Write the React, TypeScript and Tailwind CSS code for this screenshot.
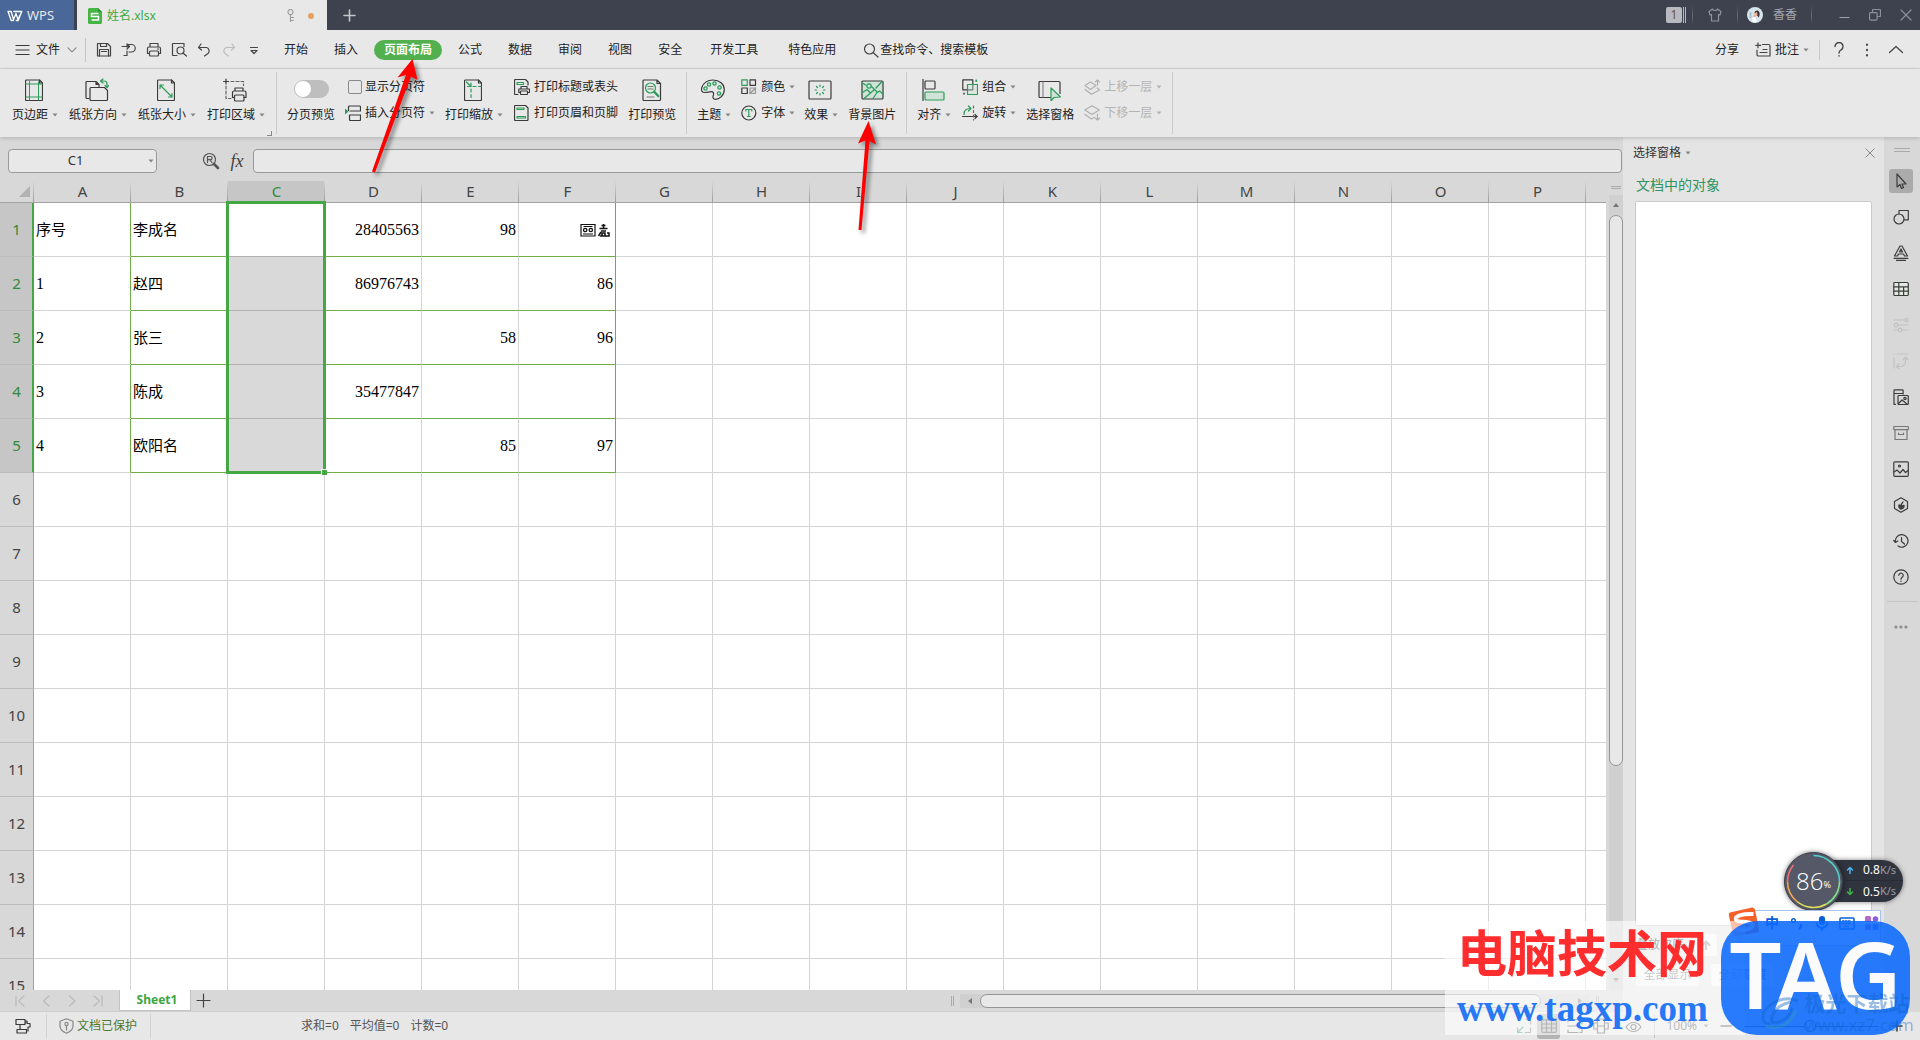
import React from "react";

const G = "#2b9c5a";
const GF = "#cfe3d8";

type IconProps = { w: number; h: number; c?: string; children: React.ReactNode; className?: string };

function Icon({ w, h, c = "#3a3a3a", children, className = "" }: IconProps) {
  return (
    <svg
      width={w}
      height={h}
      viewBox={`0 0 ${w} ${h}`}
      fill="none"
      stroke={c}
      strokeWidth="1.2"
      strokeLinecap="round"
      strokeLinejoin="round"
      className={`shrink-0 ${className}`}
      aria-hidden="true"
    >
      {children}
    </svg>
  );
}

function Caret({ light = false }: { light?: boolean }) {
  return (
    <svg width="6" height="4" viewBox="0 0 6 4" className="shrink-0" aria-hidden="true">
      <path d="M0.5 0.5h5L3 3.5z" fill={light ? "#b4b4b4" : "#858585"} />
    </svg>
  );
}

/* ---------- title bar ---------- */

function TitleSep() {
  return <span className="h-5 w-px bg-gradient-to-b from-[#3e424e] via-[#6a6d77] to-[#3e424e]" />;
}

function TitleBar() {
  return (
    <header className="flex h-[30px] shrink-0 bg-[#3e424e] text-[#e8e8e8]">
      <button className="flex w-[74px] items-center gap-1 bg-[#4a6799] pt-px pl-[7px] text-[13px]">
        <Icon w={16} h={12} c="#ffffff">
          <path d="M1 1.500h3.200l2.300 8L9 3.500l2 6L14.800 1.500H6.800M1 1.500l3.200 9h2L9 3.500M9.200 10.500h2L14.800 1.500" strokeWidth="1.3" />
        </Icon>
        WPS
      </button>
      <div className="ml-[3px] flex w-[250px] items-center bg-[#e8e8e8] pt-px pl-[11px] text-[12px] text-[#3faa42]">
        <svg width="14" height="16" viewBox="0 0 14 16" aria-hidden="true">
          <path d="M1.500 0h8.500l4 4v10.500a1.500 1.500 0 0 1-1.500 1.500h-11a1.500 1.500 0 0 1-1.500-1.500v-13a1.500 1.500 0 0 1 1.500-1.500z" fill="#45b545" />
          <path d="M10 0l4 4h-4z" fill="#2f8f35" />
          <path d="M10.500 5.500H3.500v3h7v3.500H3.500" stroke="#fff" strokeWidth="1.5" fill="none" />
        </svg>
        <span className="ml-[5px] flex-1">姓名.xlsx</span>
        <Icon w={8} h={13} c="#a0a0a0">
          <circle cx="3.500" cy="3" r="2.500" />
          <path d="M3.500 5.500v7M3.500 8.500h3M3.500 11.500h3" />
        </Icon>
        <span className="mr-[13px] ml-[13px] h-[6px] w-[6px] rounded-full bg-[#e8a05c]" />
      </div>
      <button className="ml-4 flex w-[14px] items-center" aria-label="新建">
        <Icon w={13} h={13} c="#c4c5c9">
          <path d="M6.500 1v11M1 6.500h11" strokeWidth="1.6" />
        </Icon>
      </button>
      <div className="ml-auto flex items-center pr-2 text-[12px] text-[#a6a8ae]">
        <span className="flex h-4 items-center gap-px">
          <span className="flex h-4 w-4 items-center justify-center rounded-[2px] bg-[#b9bac0] text-[12px] text-[#70512c]">1</span>
          <span className="h-4 w-px bg-[#b9bac0]" />
          <span className="h-4 w-px bg-[#b9bac0]" />
        </span>
        <span className="ml-[6px] flex"><TitleSep /></span>
        <button className="mx-[15px]" aria-label="皮肤">
          <Icon w={14} h={14} c="#8f929a">
            <path d="M4.500 1L1 3.500l1 3.500 1.500-.5v6.500h7V6.500l1.500.5 1-3.500L9.500 1c-.5 2-4.500 2-5 0z" />
          </Icon>
        </button>
        <TitleSep />
        <button className="ml-[9px] flex items-center gap-[10px]">
          <svg width="16" height="16" viewBox="0 0 16 16" aria-hidden="true">
            <circle cx="8" cy="8" r="8" fill="#d7e6ea" />
            <path d="M7.500 6c.5-2.500 2.500-3 4-2 1.500 1.200 1.500 4 .3 6.500-.8-1-1.300-1.700-2-2z" fill="#3d3437" />
            <path d="M7 6.500l3-1.500.5 3-2 2-2.500.5z" fill="#e8b7a2" />
            <path d="M2.500 4.500l2 1v6l-2-1z" fill="#a7c3c9" />
            <path d="M5 11l3-1 2 5-4 .3z" fill="#ffffff" />
          </svg>
          香香
        </button>
        <span className="ml-[14px] flex"><TitleSep /></span>
        <button className="ml-[27px]" aria-label="最小化">
          <Icon w={11} h={12} c="#a0a2a9"><path d="M1 8.500h9" /></Icon>
        </button>
        <button className="ml-[19px]" aria-label="还原">
          <Icon w={12} h={12} c="#8d9098">
            <path d="M3.500 3.500v-2a1 1 0 0 1 1-1h6a1 1 0 0 1 1 1v5a1 1 0 0 1-1 1h-2" />
            <rect x=".6" y="3.600" width="7.500" height="7.500" rx="1" />
          </Icon>
        </button>
        <button className="ml-[19px]" aria-label="关闭">
          <Icon w={12} h={12} c="#8d9098"><path d="M1 1l10 10M11 1L1 11" /></Icon>
        </button>
      </div>
    </header>
  );
}

/* ---------- menu bar ---------- */

const quickTools = [
  { label: "保存", art: (<><path d="M1.500 1.500h10l3 3v9.500h-13z" /><path d="M4.500 1.500v3h6v-3M3.500 14V7.500h9V14M5.500 9.500h5" /></>) },
  { label: "输出", art: (<><path d="M6 13.500V9M6 5V2.500h4.500a3.500 3.500 0 0 1 0 7.500H8M1 4.500h7M6 2L8.500 4.500 6 7M6 13.500h-3" /></>) },
  { label: "打印", art: (<><path d="M4 5V1.500h8V5M3.500 11.500h-2v-5a1.500 1.500 0 0 1 1.500-1.500h10a1.500 1.500 0 0 1 1.500 1.500v5h-2" /><rect x="3.500" y="9" width="9" height="5" rx="1" /><path d="M11.500 7h1" /></>) },
  { label: "打印预览", art: (<><path d="M6 13.500H2a.5.5 0 0 1-.5-.5V2a.5.5 0 0 1 .5-.5h11v3" /><circle cx="9.500" cy="8.500" r="3.500" /><path d="M12 11l3.500 3" /></>) },
  { label: "撤销", art: (<><path d="M3 5.500h7.500a3.500 3.500 0 0 1 1.500 6L8.500 14M5 2L2.500 5.500 5.500 8" /></>) },
  { label: "恢复", light: true, art: (<><path d="M13 5.500H5.500a3.500 3.500 0 0 0-1.500 6L7.500 14M11 2l2.500 3.500L10.500 8" /></>) },
  { label: "更多", art: (<><path d="M4.500 5.500h7M5 8.500l3 3 3-3z" /></>) },
];

const menus = ["开始", "插入", "页面布局", "公式", "数据", "审阅", "视图", "安全", "开发工具", "特色应用"];

function menuClass(name: string) {
  if (name === "页面布局") return "mx-[3px] h-5 rounded-full bg-[#52b04f] px-[10px] font-bold text-white";
  return name.length > 2 ? "px-[15px]" : "px-[13px]";
}

function MenuBar() {
  return (
    <nav className="flex h-[39px] shrink-0 items-center border-b border-[#d6d6d6] bg-[#e8e8e8] pt-px text-[12px] text-[#222]">
      <button className="ml-[15px] flex items-center">
        <Icon w={15} h={12}><path d="M.5 1.500h14M.5 6h14M.5 10.500h14" strokeLinecap="butt" strokeWidth="1" /></Icon>
        <span className="ml-[6px]">文件</span>
        <Icon w={10} h={6} c="#8c8c8c" className="ml-[7px]"><path d="M1 .8l4 4 4-4" /></Icon>
      </button>
      <span className="ml-2 h-6 w-px bg-[#c4c4c4]" />
      <div className="ml-[10px] flex gap-[9px]">
        {quickTools.map((t) => (
          <button key={t.label} aria-label={t.label}>
            <Icon w={16} h={16} c={t.light ? "#bcbcbc" : "#444"}>{t.art}</Icon>
          </button>
        ))}
      </div>
      <div className="ml-[9px] flex items-center">
        {menus.map((m) => (
          <button key={m} className={menuClass(m)}>{m}</button>
        ))}
      </div>
      <button className="ml-[12px] flex items-center gap-px">
        <Icon w={16} h={16} c="#444"><circle cx="6.500" cy="7" r="5" /><path d="M10.300 10.700L15 15" /></Icon>
        查找命令、搜索模板
      </button>
      <div className="ml-auto flex items-center pr-4">
        <button>分享</button>
        <button className="ml-4 flex items-center">
          <Icon w={16} h={16} c="#444">
            <path d="M7.500 2.500h6a1.500 1.500 0 0 1 1.500 1.500v10H3.500A1.500 1.500 0 0 1 2 12.500V8M3 .8v5M.8 3.300h5M8 7.500h4M5 10.500h7" />
          </Icon>
          <span className="mr-1 ml-1">批注</span>
          <Caret />
        </button>
        <span className="ml-[10px] h-5 w-px bg-[#c8c8c8]" />
        <button className="ml-[14px]" aria-label="帮助">
          <Icon w={10} h={15} c="#444"><path d="M1 4.500a4 4 0 1 1 6.200 3.300C5.500 9 5 9.500 5 11M5 13.800v.2" strokeWidth="1.400" /></Icon>
        </button>
        <button className="ml-[20px]" aria-label="更多">
          <Icon w={6} h={14} c="#444"><path d="M3 1.500v.5M3 6.800v.5M3 12v.5" strokeWidth="2" /></Icon>
        </button>
        <button className="ml-[18px]" aria-label="收起功能区">
          <Icon w={16} h={9} c="#444"><path d="M1.500 7.500L8 1.500l6.500 6" /></Icon>
        </button>
      </div>
    </nav>
  );
}

/* ---------- ribbon ---------- */

const page = "M1.500 1h13l3 3v16.500a1 1 0 0 1-1 1h-15a1 1 0 0 1-1-1V2a1 1 0 0 1 1-1z";
const fold = "M14.500 1v3h3";

function Big({ label, caret = false, children }: { label: string; caret?: boolean; children: React.ReactNode }) {
  return (
    <button className="flex shrink-0 flex-col items-center">
      <span className={`flex h-[22px] items-center ${caret ? "pr-[3px]" : ""}`}>{children}</span>
      <span className={`mt-[6px] flex items-center leading-4 ${caret ? "pr-px" : ""}`}>
        {label}
        {caret && <span className="ml-1 flex"><Caret /></span>}
      </span>
    </button>
  );
}

function Small({ label, caret = false, disabled = false, children }: { label: string; caret?: boolean; disabled?: boolean; children: React.ReactNode }) {
  return (
    <button disabled={disabled} className={`flex items-center leading-4 ${disabled ? "text-[#b4b4b4]" : ""}`}>
      <span className="mr-1 flex">{children}</span>
      {label}
      {caret && <span className="ml-[4px] flex"><Caret light={disabled} /></span>}
    </button>
  );
}

function Sep() {
  return <span className="-mt-[7px] h-[62px] w-px shrink-0 bg-[#cbcbcb]" />;
}

function Stack({ children }: { children: React.ReactNode }) {
  return <div className="flex shrink-0 flex-col items-start gap-[10px]">{children}</div>;
}

function Ribbon() {
  return (
    <section className="relative z-10 flex h-[68px] shrink-0 items-start gap-[10px] bg-[#e8e8e8] pt-[10px] pl-3 text-[12px] whitespace-nowrap text-[#222] shadow-[0_1px_4px_rgba(0,0,0,0.18)]">
      <Big label="页边距" caret>
        <Icon w={18} h={22}>
          <path d={page} /><path d={fold} />
          <path d="M4.500 2v19M13.500 3v18M1 5h16M1 18h16" stroke={G} strokeWidth="1" />
        </Icon>
      </Big>
      <Big label="纸张方向" caret>
        <Icon w={24} h={24}>
          <path d="M4 20.500H2a1 1 0 0 1-1-1V4.500a1 1 0 0 1 1-1h9l3 3v2M11 3.500v3h3" />
          <path d="M6 9.500h13.500l3 3v9a1 1 0 0 1-1 1H6a1 1 0 0 1-1-1v-11a1 1 0 0 1 1-1z" />
          <path d="M16 3h3a3 3 0 0 1 3 3v3M18 1l-2.500 2L18 5M20 7.500l2 2 2-2" stroke={G} />
        </Icon>
      </Big>
      <Big label="纸张大小" caret>
        <Icon w={18} h={22}>
          <path d={page} /><path d={fold} />
          <path d="M3 6l12 12M3 9.500V6h3.500M15 14.500V18h-3.500" stroke={G} />
        </Icon>
      </Big>
      <div className="relative shrink-0">
        <Big label="打印区域" caret>
          <Icon w={24} h={24}>
            <path d="M3 1v5M.6 3.500h5" />
            <path d="M8 3.500h12.500v4M3 8v12.500h5" strokeDasharray="3 2" stroke="#666" />
            <path d="M12 13v-3h8v3M11 19.500H9.500v-5A1.500 1.500 0 0 1 11 13h10.500a1.500 1.500 0 0 1 1.500 1.500v5h-2" />
            <rect x="11.500" y="17" width="9.500" height="6" rx="1" />
          </Icon>
        </Big>
        <span className="absolute right-[-6px] bottom-[-13px] h-[5px] w-[5px] border-r border-b border-[#888]" />
      </div>
      <Sep />
      <label className="flex shrink-0 flex-col items-center">
        <input type="checkbox" role="switch" className="relative mt-px h-[18px] w-[35px] appearance-none rounded-full bg-[#bebebe] before:absolute before:top-px before:left-px before:h-4 before:w-4 before:rounded-full before:bg-white checked:bg-[#52b04f] checked:before:left-[18px]" />
        <span className="mt-[9px] leading-4">分页预览</span>
      </label>
      <Stack>
        <label className="flex items-center leading-4">
          <input type="checkbox" className="mr-[3px] ml-[3px] h-[14px] w-[14px] appearance-none rounded-[2px] border border-[#8a8a8a] checked:bg-[#52b04f]" />
          显示分页符
        </label>
        <Small label="插入分页符" caret>
          <Icon w={16} h={16}>
            <path d="M0 3.500v6L3.500 6.500z" fill={G} stroke="none" />
            <path d="M3.500 5.500V2a1 1 0 0 1 1-1h10a1 1 0 0 1 1 1v3.500M15.500 10v4.500a1 1 0 0 1-1 1h-9a1 1 0 0 1-1-1V10zM5 6h10.500" />
          </Icon>
        </Small>
      </Stack>
      <Big label="打印缩放" caret>
        <Icon w={18} h={22}>
          <path d={page} /><path d={fold} />
          <path d="M2.500 3L7 7.500M7 4v3.500H3.500" stroke={G} />
          <path d="M9 7.500h8M7 10v11" stroke={G} strokeDasharray="3 2.500" />
        </Icon>
      </Big>
      <Stack>
        <Small label="打印标题或表头">
          <Icon w={16} h={16}>
            <path d="M4 15.500H1.500a1 1 0 0 1-1-1v-13a1 1 0 0 1 1-1h10l2.500 2.500v3" />
            <path d="M3 3.500h6.500v2H3z" stroke={G} />
            <path d="M7 10V7.500h6V10M6 13.500H4.800V10h10.700v3.500H14" /><rect x="6.500" y="12" width="7" height="3.500" rx=".8" />
          </Icon>
        </Small>
        <Small label="打印页眉和页脚">
          <Icon w={16} h={16}>
            <path d="M1.500.5h10L14 3v11.500a1 1 0 0 1-1 1H1.500a1 1 0 0 1-1-1v-13a1 1 0 0 1 1-1z" />
            <path d="M3 3h7v1.500H3zM3 11.500h8.500V13H3z" stroke={G} />
          </Icon>
        </Small>
      </Stack>
      <Big label="打印预览">
        <Icon w={20} h={22}>
          <path d="M2 1h13l3.500 3.500v16a1 1 0 0 1-1 1H2a1 1 0 0 1-1-1V2a1 1 0 0 1 1-1zM15 1v3.500h3.500" />
          <circle cx="8.500" cy="9" r="5" stroke={G} fill="#dcebe2" />
          <path d="M12.200 12.700l4 4.300" stroke={G} strokeWidth="2.400" />
          <path d="M6 7.500h5M6 10h5M5 18h7" stroke="#777" />
        </Icon>
      </Big>
      <Sep />
      <div className="flex shrink-0 gap-[9px]">
        <Big label="主题" caret>
          <Icon w={24} h={22}>
            <path d="M4 13.500C.5 13.500 0 11 .8 8.500 2.500 4 7 1 12 1c6.500 0 11.300 4 11.300 9.500 0 6-5 9.800-8.500 9.800-3 0-3.300-2-2.500-4 .8-2.300 0-3.600-2-3.600-2.300 0-3.500.8-6.300.8z" />
            <g stroke={G} fill={GF}><circle cx="4.500" cy="9.500" r="1.700" /><circle cx="8" cy="5.500" r="1.700" /><circle cx="13.500" cy="4.500" r="1.700" /><circle cx="18.500" cy="8.500" r="1.700" /><circle cx="18" cy="14.500" r="1.700" /></g>
          </Icon>
        </Big>
        <Stack>
          <Small label="颜色" caret>
            <Icon w={16} h={16}>
              <rect x=".8" y=".8" width="5.500" height="5.500" stroke={G} /><rect x="9" y=".8" width="5.500" height="5.500" />
              <rect x=".8" y="9" width="5.500" height="5.500" /><rect x="9" y="9" width="5.500" height="5.500" stroke="#999" fill="#ddd" /><path d="M9 14.500L14.500 9" stroke="#999" />
            </Icon>
          </Small>
          <Small label="字体" caret>
            <Icon w={16} h={16}>
              <circle cx="7.800" cy="8" r="7" />
              <path d="M4.800 6V4.500h6V6M7.800 4.500v7M6.500 11.500h2.600" stroke={G} />
            </Icon>
          </Small>
        </Stack>
        <Big label="效果" caret>
          <Icon w={24} h={20}>
            <rect x="1" y="1" width="22" height="18" rx="1" />
            <path d="M12 5v1.500M12 13.500V15M7 10h1.500M15.500 10H17M8.500 6.500l1 1M14.500 12.500l1 1M15.500 6.500l-1 1M9.500 12.500l-1 1" stroke={G} />
          </Icon>
        </Big>
        <Big label="背景图片">
          <Icon w={23} h={20}>
            <rect x="1" y="1" width="21" height="18" rx="1" fill={GF} />
            <path d="M1.500 12.500L6 9.500l3.500 3.500 4-3.500 3 3 2-1.500 3.500 3M1.500 3l3 2M10.500 6.500L13 9M15 8l6-6.500M3 18.500l6-5M12 18.500l4-6" stroke={G} />
            <circle cx="8" cy="6" r="2.200" stroke={G} />
          </Icon>
        </Big>
      </div>
      <Sep />
      <Big label="对齐" caret>
        <Icon w={23} h={22}>
          <path d="M1 .5v21" /><rect x="3" y="2" width="10" height="8" rx="1" />
          <rect x="3" y="13" width="19" height="8" rx="1" stroke={G} fill={GF} />
        </Icon>
      </Big>
      <Stack>
        <Small label="组合" caret>
          <Icon w={16} h={16}>
            <rect x=".8" y=".8" width="10" height="10" /><rect x="5.500" y="5.500" width="10" height="10" stroke={G} fill="#cfe3d866" />
            <path d="M14.200 1.500v.5" stroke={G} strokeWidth="1.800" /><path d="M2 14.500v.3" stroke="#555" strokeWidth="1.800" />
          </Icon>
        </Small>
        <Small label="旋转" caret>
          <Icon w={16} h={16}>
            <path d="M2 9.500c0-4 2-6 6.500-6M6.500 1L9 3.500 6.500 6" stroke={G} />
            <path d="M.6 11.500h14.800M13 9.500l2 2-2 2" />
            <path d="M11.500 1v14" strokeDasharray="2 2.500" stroke="#666" />
          </Icon>
        </Small>
      </Stack>
      <Big label="选择窗格">
        <Icon w={24} h={22}>
          <path d="M13 18.500H2a1 1 0 0 1-1-1v-14a1 1 0 0 1 1-1h19a1 1 0 0 1 1 1v11" /><path d="M5 3v15" stroke="#888" />
          <path d="M13 9v13l3-3.500 6.500-.5z" stroke={G} fill={GF} />
        </Icon>
      </Big>
      <Stack>
        <Small label="上移一层" caret disabled>
          <Icon w={16} h={16} c="#b0b0b0"><path d="M6.500 3L1 6.500l5.500 4 5.500-4zM1 10.500l6.500 4.800 8-4.300-2.500-2M13.500 6V1M11.500 2.800L13.500 1l2 1.800" /></Icon>
        </Small>
        <Small label="下移一层" caret disabled>
          <Icon w={16} h={16} c="#b0b0b0"><path d="M8 .8L.8 5 8 9.500 15.300 5zM1 9.500L7.500 14l3-1.800M13.500 9v6M11.500 13.200l2 1.800 2-1.800" /></Icon>
        </Small>
      </Stack>
      <Sep />
    </section>
  );
}

/* ---------- sheet ---------- */

const cols = "ABCDEFGHIJKLMNOP".split("");
const rows = Array.from({ length: 15 }, (_, i) => i + 1);
const data: Record<string, string> = {
  A1: "序号", A2: "1", A3: "2", A4: "3", A5: "4",
  B1: "李成名", B2: "赵四", B3: "张三", B4: "陈成", B5: "欧阳名",
  D1: "28405563", D2: "86976743", D4: "35477847",
  E1: "98", E3: "58", E5: "85",
  F2: "86", F3: "96", F5: "97",
};

function cellClass(c: string, r: number) {
  let right = "border-r-[#d4d4d4]";
  let bottom = "border-b-[#d4d4d4]";
  if (r <= 5) {
    if (c === "A" || c === "F") right = "border-r-[#70ad47]";
    if ("BDEF".includes(c)) bottom = "border-b-[#70ad47]";
    if (c === "C") bottom = "border-b-[#b0b0b0]";
  }
  const bg = c === "C" && r > 1 && r <= 5 ? "bg-[#d9d9d9]" : "bg-white";
  const align = "DEF".includes(c) ? "text-right" : "text-left";
  const v = data[c + r] ?? "";
  const font = /^\d*$/.test(v) ? "font-['Liberation_Serif',serif] text-[16px]" : "text-[15px]";
  return `relative h-[54px] border-r border-b px-[2px] text-black ${right} ${bottom} ${bg} ${align} ${font}`;
}

function OverflowGlyphs() {
  return (
    <svg width="30" height="14" viewBox="0 0 30 14" fill="none" stroke="#111" className="mr-[3px] ml-auto" role="img" aria-label="图标">
      <path d="M1 1.500h14v11.500H1zM3 11h10M3.500 3.500h9" strokeWidth="1.200" />
      <circle cx="5.200" cy="7" r="1.700" strokeWidth="1.300" /><circle cx="10.800" cy="7" r="1.700" strokeWidth="1.300" />
      <path d="M23.500 1v4M21.500 2.500h4M19.500 5.500h8M21 8h5M18.500 13l2.500-4M20 13h9v-3h-2M22 13v-3h3v3" strokeWidth="1.500" />
    </svg>
  );
}

function Sheet() {
  const colLine = "bg-[linear-gradient(to_bottom,#d8d8d8,#9c9c9c)] bg-[length:1px_100%] bg-right bg-no-repeat";
  return (
    <div className="min-w-0 flex-1 overflow-hidden bg-white">
      <table className="w-full table-fixed border-separate border-spacing-0">
        <colgroup>
          <col className="w-[34px]" />
          {cols.map((c) => <col key={c} className="w-[97px]" />)}
          <col />
        </colgroup>
        <thead>
          <tr className="text-[15px] leading-[21px]">
            <th className={`h-[22px] border-b border-[#a2a2a2] bg-[#d8d8d8] p-0 ${colLine}`}>
              <svg width="11" height="11" viewBox="0 0 11 11" className="mr-1 ml-auto" aria-hidden="true"><path d="M11 0v11H0z" fill="#b2b2b2" /></svg>
            </th>
            {cols.map((c) => (
              <th key={c} scope="col" className={`border-b border-[#a2a2a2] p-0 font-normal ${colLine} ${c === "C" ? "bg-[#c6c6c6] text-[#2f8a3a]" : "bg-[#d8d8d8] text-[#444]"}`}>{c}</th>
            ))}
            <th className="border-b border-[#a2a2a2] bg-[#d8d8d8] p-0" />
          </tr>
        </thead>
        <tbody>
          {rows.map((r) => (
            <tr key={r}>
              <th scope="row" className={`h-[54px] border-b border-b-[#bcbcbc] p-0 pr-[5px] text-center text-[15px] font-normal ${r <= 5 ? "border-r-2 border-r-[#43a843] bg-[#c6c6c6] pl-[6px] text-[#2f8a3a]" : "border-r border-r-[#a2a2a2] bg-[#d8d8d8] pl-[5px] text-[#444]"}`}>{r}</th>
              {cols.map((c) => (
                <td key={c} className={cellClass(c, r)}>
                  {data[c + r]}
                  {c === "F" && r === 1 && <OverflowGlyphs />}
                  {c === "C" && r === 1 && (
                    <span className="absolute -top-[2px] -left-[2px] z-10 h-[273px] w-[100px] border-[3px] border-[#43a843]">
                      <span className="absolute -right-[4px] -bottom-[4px] h-[6px] w-[6px] border-t border-l border-white bg-[#43a843]" />
                    </span>
                  )}
                </td>
              ))}
              <td className="border-b border-[#d4d4d4]" />
            </tr>
          ))}
        </tbody>
      </table>
    </div>
  );
}

function FormulaBar() {
  return (
    <div className="flex h-[44px] shrink-0 items-center pt-[4px] pl-2">
      <div className="flex h-6 w-[149px] items-center rounded-[4px] border border-[#999] bg-[#e8e8e8] pr-[2px]">
        <input aria-label="名称框" defaultValue="C1" className="w-full min-w-0 bg-transparent pr-[6px] text-center text-[13px] text-[#333] outline-none" />
        <Caret />
      </div>
      <button className="ml-[45px]" aria-label="浏览公式结果">
        <Icon w={18} h={18} c="#555">
          <circle cx="7.500" cy="7.500" r="6" /><path d="M12 12l4 4" strokeWidth="2.600" /><path d="M5.500 10.500v-6h3a1.500 1.500 0 0 1 0 3.200h-3M8 8l2 2.500" />
        </Icon>
      </button>
      <button className="ml-[8px] w-[18px] font-['Liberation_Serif',serif] text-[18px] leading-5 text-[#444] italic" aria-label="插入函数">fx</button>
      <input aria-label="编辑栏" className="ml-[7px] h-6 min-w-0 flex-1 rounded-[4px] border border-[#999] bg-[#e8e8e8] px-2 text-[13px] outline-none" />
      <span className="w-px" />
    </div>
  );
}

function VScroll() {
  return (
    <div className="flex w-[17px] shrink-0 flex-col bg-[#d8d8d8] pl-[3px]">
      <span className="mx-[2px] mt-[5px] h-[3px] border-y border-[#aaa]" />
      <div className="mt-[6px] flex min-h-0 flex-1 flex-col items-center bg-[#d0d0d0] py-2">
        <svg width="6" height="4" viewBox="0 0 6 4" className="shrink-0" aria-hidden="true"><path d="M0 4h6L3 0z" fill="#777" /></svg>
        <div className="my-2 min-h-0 w-full flex-1">
          <div className="h-[73%] rounded-full border border-[#959595] bg-[#e8e8e8]" />
        </div>
        <svg width="6" height="4" viewBox="0 0 6 4" className="shrink-0" aria-hidden="true"><path d="M0 0h6L3 4z" fill="#777" /></svg>
      </div>
    </div>
  );
}

function SheetTabs() {
  const nav = ["M2 1v10M10 1L4.500 6 10 11", "M9 1L3.500 6 9 11", "M3.500 1L9 6l-5.500 5", "M2 1l5.500 5L2 11M10 1v10"];
  return (
    <div className="flex h-[22px] shrink-0 items-center border-b border-[#cfcfcf] bg-[#d8d8d8]">
      <div className="flex w-[119px] gap-[14px] pl-[14px]">
        {nav.map((d, i) => (
          <button key={d} aria-label={["首个工作表", "上一个工作表", "下一个工作表", "末个工作表"][i]}>
            <Icon w={12} h={12} c="#bababa"><path d={d} /></Icon>
          </button>
        ))}
      </div>
      <button className="h-[21px] w-[72px] border-x border-b border-[#c4c4c4] bg-white pl-1 text-[12px] font-bold text-[#3fa53f]">Sheet1</button>
      <button className="ml-[5px]" aria-label="新建工作表">
        <Icon w={15} h={15} c="#444"><path d="M7.500 1v13M1 7.500h13" /></Icon>
      </button>
      <div className="ml-auto flex h-[14px] w-[672px] items-center">
        <span className="mr-[6px] h-[10px] w-[3px] border-x border-[#aaa]" />
        <div className="flex h-[14px] flex-1 items-center bg-[#d0d0d0]">
          <svg width="4" height="6" viewBox="0 0 4 6" className="mx-2" aria-hidden="true"><path d="M4 0v6L0 3z" fill="#777" /></svg>
          <div className="flex-1 pr-[37px]"><div className="h-[14px] rounded-full border border-[#959595] bg-[#e8e8e8]" /></div>
          <svg width="4" height="6" viewBox="0 0 4 6" className="mr-2" aria-hidden="true"><path d="M0 0v6l4-3z" fill="#777" /></svg>
        </div>
        <span className="mr-6 ml-[6px] h-[10px] w-[3px] border-x border-[#aaa]" />
      </div>
    </div>
  );
}

/* ---------- right side ---------- */

function SelectionPane() {
  const btn = "flex h-[22px] items-center justify-center rounded-[2px] bg-[#f6f6f6] text-[#777]";
  return (
    <aside className="flex w-[261px] shrink-0 flex-col bg-[#e4e4e4] px-3 text-[12px] text-[#333]">
      <div className="-mx-[2px] flex h-8 items-center justify-between">
        <button className="flex items-center gap-1">选择窗格<Caret /></button>
        <button aria-label="关闭窗格" className="-mr-px"><Icon w={10} h={10} c="#888"><path d="M.8.8l8.400 8.400M9.200.8L.8 9.200" strokeWidth="1" /></Icon></button>
      </div>
      <h2 className="flex h-8 items-center pb-px pl-px text-[14px] text-[#2f9461]">文档中的对象</h2>
      <div className="min-h-0 flex-1 rounded-[2px] border border-[#cacaca] bg-white" />
      <div className="mt-2 flex h-[22px] items-center pl-px">
        <span>叠放次序</span>
        <button className={`${btn} ml-[11px] w-[22px]`} aria-label="上移"><Icon w={10} h={10} c="#999"><path d="M5 9.500V2M1.500 5L5 1.500 8.500 5" strokeWidth="2" /></Icon></button>
        <button className={`${btn} ml-[11px] w-[22px]`} aria-label="下移"><Icon w={10} h={10} c="#bbb"><path d="M5 .5V8M1.500 5L5 8.500 8.500 5" strokeWidth="2" /></Icon></button>
      </div>
      <div className="mt-2 mb-[26px] flex gap-3 pl-px">
        <button className={`${btn} w-[63px]`}>全部显示</button>
        <button className={`${btn} w-[63px]`}>全部隐藏</button>
      </div>
    </aside>
  );
}

const rail = [
  { n: "选择", active: true, art: <path d="M4 1v13l3-2.500 1.500 4 2-1-1.500-3.500h4z" /> },
  { n: "形状", art: <><path d="M6 5V1.500h9.300v9.300H11" /><circle cx="6" cy="10" r="5" /></> },
  { n: "艺术字", art: <><path d="M1.500 11L7 1h2l5.500 10h-3l-1-2h-5l-1 2zM6.500 7L8 4l1.500 3zM1 13.300h14M3.500 15.400h9" /></> },
  { n: "表格", art: <><rect x=".8" y="1.500" width="14.500" height="13" rx="1" fill="#e2e8e2" /><path d="M1 5.800h14M1 10.200h14M5.800 2v12.500M10.600 6v8.500" /></> },
  { n: "筛选", light: true, art: <><path d="M1 3h11M5 8h10M1 13h4.500M9 13h6" /><circle cx="13.500" cy="3" r="1.600" /><circle cx="3" cy="8" r="1.800" /><circle cx="7.200" cy="13" r="1.800" /></> },
  { n: "转置", light: true, art: <><path d="M1 5v10M4 1h11M1 1v.2M4 13.500h4a5 5 0 0 0 4.500-5V4M6 11l-2.500 2.500L6 16M10 6.500L12.500 4 15 6.500" /></> },
  { n: "图库", art: <><path d="M2.500 15.300H1V1.500A.8.8 0 0 1 1.800.8h7.500a.8.800 0 0 1 .8.800V5M1 4.500h9" /><rect x="5" y="6.500" width="10.300" height="9" rx=".8" /><circle cx="12" cy="9.500" r="1.200" /><path d="M5.500 14.500L9 11l5 4" /></> },
  { n: "素材", mid: true, art: <><rect x=".8" y="1.500" width="14.500" height="3.200" rx=".5" /><path d="M2 5v9.500h12V5M5.500 8v1.500h5V8" /></> },
  { n: "图片", art: <><rect x=".8" y=".8" width="14.500" height="14.500" rx="1" /><circle cx="6.500" cy="5" r="1" /><path d="M1 11l3-2 3 3 3-3.500 2.500 3 2.500-2" /></> },
  { n: "资源", art: <><path d="M8 .8l6.500 3.700v7L8 15.300l-6.500-3.800v-7z" /><path d="M8 12c-2-1-2.500-2.500-2-4 1 .3 1.700 1 2 2 0-2.500.5-4 2-5M8 12c2-.3 3-2 3-3.500-1.500 0-2.500.8-3 3.500z" strokeWidth="1.400" /></> },
  { n: "历史", art: <><path d="M2.500 9A6.300 6.300 0 1 1 5 13M.8 7.500l1.700 2L4.800 8M8.500 4.500V8.500l3 2.500" /></> },
  { n: "帮助", art: <><circle cx="8" cy="8" r="7.200" /><path d="M5.800 6.300a2.200 2.200 0 1 1 3.400 1.900C8.300 8.800 8 9.200 8 10.200M8 12.200v.2" /></> },
];

function Rail() {
  return (
    <div className="flex w-9 shrink-0 flex-col items-center bg-[#d8d8d8]">
      <span className="mt-[11px] mb-[17px] h-1 w-4 shrink-0 border-y border-[#aaa]" />
      <div className="-ml-0.5 flex flex-col gap-3">
        {rail.map((r) => (
          <button key={r.n} aria-label={r.n} className={`flex h-6 w-6 items-center justify-center rounded-[3px] ${r.active ? "bg-[#ababab]" : ""}`}>
            <Icon w={16} h={16} c={r.light ? "#c2c2c2" : r.mid ? "#777" : "#3c3c3c"}>{r.art}</Icon>
          </button>
        ))}
      </div>
      <span className="mt-3 h-px w-[30px] shrink-0 bg-[#c4c4c4]" />
      <button aria-label="更多" className="mt-[23px] -ml-0.5"><Icon w={14} h={4} c="#888"><circle cx="2" cy="2" r="1" /><circle cx="7" cy="2" r="1" /><circle cx="12" cy="2" r="1" /></Icon></button>
    </div>
  );
}

/* ---------- status bar ---------- */

function StatusBar() {
  const c = "#4a4a4a";
  return (
    <footer className="flex h-7 shrink-0 items-center bg-[#e7e7e7] text-[12px] text-[#555]">
      <button className="ml-[15px]" aria-label="后台">
        <Icon w={16} h={16}><path d="M1 1.500h9v5H1zM10 3h2v2h-2M5 6.500v5M2 11.500h9.500V15H2zM12.500 5.500h2.500V9h-2v4" /></Icon>
      </button>
      <span className="ml-[15px] h-6 w-px bg-[#d2d2d2]" />
      <button className="ml-3 flex items-center gap-[3px] text-[#4c7a34]">
        <Icon w={15} h={16} c="#888"><path d="M7.500.8l6.500 2.500v5c0 3.500-3 5.500-6.500 7C4 13.800 1 11.800 1 8.300v-5z" /><circle cx="7.500" cy="6" r="1.600" /><path d="M7.500 8v4" /></Icon>
        文档已保护
      </button>
      <span className="ml-[13px] h-6 w-px bg-[#d2d2d2]" />
      <p className="ml-[150px] flex gap-[11px]"><span>求和=0</span><span>平均值=0</span><span>计数=0</span></p>
      <div className="ml-auto flex items-center pr-[17px]">
        <button aria-label="全屏"><Icon w={16} h={16} c={G}><path d="M1.500 10v4.500H6M2 14l5-5" /><path d="M10 1.500h4.500V6M9 14.500h5.500V10" stroke="#777" /></Icon></button>
        <button aria-label="普通视图" className="ml-[5px] flex h-[25px] w-[23px] items-center justify-center rounded-[3px] bg-[#b4b4b4]"><Icon w={16} h={14} c={c}><rect x=".8" y=".8" width="14.500" height="12.500" rx="1" /><path d="M1 5h14M1 9h14M5.500 1v12M10.500 1v12" /></Icon></button>
        <button aria-label="分页预览" className="ml-[7px]"><Icon w={16} h={16} c={c}><path d="M1 4V1.500h10M1 8h8M1 12v2.500h10M13 1.500h2V6M12 7v3M15 10v4.500h-2" /></Icon></button>
        <button aria-label="页面布局" className="ml-[10px]"><Icon w={16} h={16} c={c}><path d="M4.500 1h7v4h3.700v6h-3.700v4h-7v-4H.8V5h3.700zM4.500 5v6M11.500 5v6M4.500 8h7" /></Icon></button>
        <button aria-label="护眼模式" className="ml-4"><Icon w={17} h={14} c={c}><path d="M1 8c4-6 11-6 15 0-4 6-11 6-15 0zM12.500 1.500l3-1" /><circle cx="8.500" cy="8" r="2.500" /></Icon></button>
        <span className="ml-3 h-6 w-px bg-[#c4c4c4]" />
        <button className="ml-[11px] flex items-center gap-[6px]">100%<Caret /></button>
        <button aria-label="缩小" className="ml-[11px]"><Icon w={12} h={12} c="#444"><path d="M1 6h10" strokeWidth="1.600" /></Icon></button>
        <input type="range" aria-label="缩放比例" min="0" max="200" defaultValue="98" className="mx-3 h-3 w-[135px] appearance-none bg-[linear-gradient(#555,#555)] bg-[length:100%_1px] bg-center bg-no-repeat [&::-webkit-slider-thumb]:h-3 [&::-webkit-slider-thumb]:w-3 [&::-webkit-slider-thumb]:appearance-none [&::-webkit-slider-thumb]:rounded-full [&::-webkit-slider-thumb]:border [&::-webkit-slider-thumb]:border-[#555] [&::-webkit-slider-thumb]:bg-[#e7e7e7]" />
        <button aria-label="放大"><Icon w={12} h={12} c="#444"><path d="M1 6h10M6 1v10" strokeWidth="1.600" /></Icon></button>
      </div>
    </footer>
  );
}

/* ---------- things floating over the window ---------- */

function SpeedBall() {
  return (
    <div className="absolute right-[17px] bottom-[130px] z-20 flex h-[58px] w-[119px] items-center">
      <div className="ml-7 flex h-[42px] flex-1 flex-col justify-center rounded-r-full bg-[#30343f] pl-[34px] text-[12px] text-white shadow-[0_0_5px_rgba(0,0,0,0.5)]">
        <span className="flex h-[21px] items-center border-b border-[#282b34]">
          <Icon w={8} h={8} c="#4fb4f0"><path d="M4 7.500V1.500M1.500 4L4 1.500 6.500 4" strokeWidth="1.500" /></Icon>
          <span className="ml-[9px]">0.8</span><span className="text-[11px] text-[#9a9da5]">K/s</span>
        </span>
        <span className="flex h-[21px] items-center">
          <Icon w={8} h={8} c="#3fb54a"><path d="M4 .5v6M1.500 4L4 6.500 6.500 4" strokeWidth="1.500" /></Icon>
          <span className="ml-[9px]">0.5</span><span className="text-[11px] text-[#9a9da5]">K/s</span>
        </span>
      </div>
      <div className="absolute left-0 flex h-[59px] w-[59px] items-center justify-center rounded-full border border-[#3a3d48] bg-[#545867] text-white shadow-[0_0_5px_rgba(0,0,0,0.5)]">
        <svg width="57" height="57" viewBox="0 0 57 57" fill="none" strokeWidth="1.600" className="absolute" aria-hidden="true">
          <path d="M28.500 2.500A26 26 0 0 1 54.500 28.500" stroke="#4fd0cc" />
          <path d="M54.500 28.500A26 26 0 0 1 41.500 51" stroke="#84dc8c" />
          <path d="M41.500 51A26 26 0 0 1 12 48.500" stroke="#dfe05a" />
          <path d="M12 48.500A26 26 0 0 1 2.500 28.500" stroke="#f0a550" />
          <path d="M2.500 28.500A26 26 0 0 1 8.500 12" stroke="#ee7070" />
        </svg>
        <span className="font-['Open_Sans',sans-serif] text-[24px] font-light">86</span>
        <span className="mt-2 text-[9px]">%</span>
      </div>
    </div>
  );
}

function InputMethodBar() {
  const b = "#0a5fd8";
  return (
    <div className="absolute right-[39px] bottom-[94px] z-20 flex h-[36px] w-[141px] items-start border border-[#a9c3ea] bg-white pt-[4px] pl-[24px]">
      <svg width="32" height="32" viewBox="0 0 32 32" className="absolute -top-[5px] -left-[13px]" aria-hidden="true">
        <path d="M2 6.500L24 1.500a3 3 0 0 1 3 2l4 20a3 3 0 0 1-2 3L9 30a3 3 0 0 1-4-2L.8 9A2.500 2.500 0 0 1 2 6.500z" fill="#f4622a" />
        <path d="M25.500 8C14 7.500 6 10 8 14c2 3 15 .5 16.500 4.500C26 22.500 17 25 8.500 23" stroke="#fff" strokeWidth="4" fill="none" />
      </svg>
      <div className="flex items-center gap-[10px] text-[#0a5fd8]">
        <span className="text-[14px] leading-4 font-bold">中</span>
        <Icon w={16} h={16} c={b}><circle cx="4.500" cy="5.500" r="1.800" strokeWidth="1.500" /><path d="M12 10v1c0 1-.5 2-1.500 2.500" strokeWidth="2.500" /></Icon>
        <Icon w={14} h={16} c={b}><rect x="4.500" y="1.500" width="5" height="8" rx="2.500" fill={b} /><path d="M1.500 8a5.500 5 0 0 0 11 0M7 13v2" strokeWidth="1.800" /></Icon>
        <Icon w={16} h={16} c={b}><rect x="1" y="3" width="14" height="11" rx="1" strokeWidth="1.600" /><path d="M3.500 6h9M3.500 8.500h9M5 11.500h6" strokeDasharray="1.500 1.500" strokeWidth="1.500" /></Icon>
        <Icon w={14} h={16}><g stroke="none"><rect y="1" width="6" height="6" rx="1.500" fill="#b368c8" /><circle cx="10.500" cy="4" r="2.800" fill="#8a5ce0" /><rect y="9" width="6" height="6" rx="1.500" fill="#a35cd0" /><rect x="7.500" y="9" width="6" height="6" rx="1.500" fill="#7a66e6" /></g></Icon>
      </div>
    </div>
  );
}

function SiteBanner() {
  return (
    <div className="pointer-events-none absolute right-[2px] bottom-[5px] z-30 flex h-[114px] w-[473px] bg-[linear-gradient(to_right,rgba(255,255,255,0.6)_300px,transparent_300px)] pr-2 whitespace-nowrap">
      <div className="flex-1 pt-px pl-[12px]">
        <p className="font-['Noto_Sans_CJK_SC',sans-serif] text-[50px] leading-[56px] font-bold text-[#ff2d2d]">电脑技术网</p>
        <p className="mt-[9px] font-['Liberation_Serif',serif] text-[37px] leading-[44px] font-bold text-[#2678f5]">www.tagxp.com</p>
      </div>
      <div className="relative flex h-[114px] w-[189px] items-center justify-center rounded-[36px] bg-[#0a68ff]/87 pb-2">
        <span className="font-['Noto_Sans',sans-serif] text-[92px] leading-[104px] font-semibold text-[#fbfbfb]">TAG</span>
        <div className="absolute -right-[4px] bottom-0 flex items-center gap-1 text-[#0c62c4] opacity-40">
          <svg width="40" height="34" viewBox="0 0 40 34" fill="none" strokeWidth="3" aria-hidden="true">
            <path d="M38 5C22-2 2 10 3 22c0 4 3 6 7 6M32 6C18 8 10 18 12 26c8 2 18-4 20-14" stroke="#0c62c4" />
            <path d="M6 30c10 4 24 0 30-16" stroke="#2b9fb0" />
          </svg>
          <div>
            <p className="text-[21px] leading-6 font-bold">极光下载站</p>
            <p className="text-[17px] leading-5">www.xz7.com</p>
          </div>
        </div>
      </div>
    </div>
  );
}

function Pointers() {
  return (
    <>
      <svg width="64" height="124" viewBox="0 0 64 124" className="pointer-events-none absolute top-[55px] left-[367px] z-30 drop-shadow-[3px_3px_2px_rgba(0,0,0,0.45)]" aria-hidden="true">
        <path d="M45.500 4l5 21-6.500-3.500L8 117.500 5 116.500 39 20l-8.500 2.500z" fill="#ff0000" />
      </svg>
      <svg width="32" height="120" viewBox="0 0 32 120" className="pointer-events-none absolute top-[117px] left-[852px] z-30 drop-shadow-[3px_3px_2px_rgba(0,0,0,0.45)]" aria-hidden="true">
        <path d="M16.500 4l7.500 23.500-6.500-3.500L9.500 113h-3l7-89.500-7.500 3z" fill="#ff0000" />
      </svg>
    </>
  );
}

export default function App() {
  return (
    <div className="relative flex h-screen flex-col overflow-hidden bg-[#d8d8d8] font-['Noto_Sans','Noto_Sans_CJK_SC',sans-serif] text-[12px]">
      <TitleBar />
      <MenuBar />
      <Ribbon />
      <main className="flex min-h-0 flex-1">
        <div className="flex min-w-0 flex-1 flex-col">
          <FormulaBar />
          <div className="flex min-h-0 flex-1">
            <Sheet />
            <VScroll />
          </div>
          <SheetTabs />
        </div>
        <SelectionPane />
        <Rail />
      </main>
      <StatusBar />
      <SpeedBall />
      <InputMethodBar />
      <SiteBanner />
      <Pointers />
    </div>
  );
}
